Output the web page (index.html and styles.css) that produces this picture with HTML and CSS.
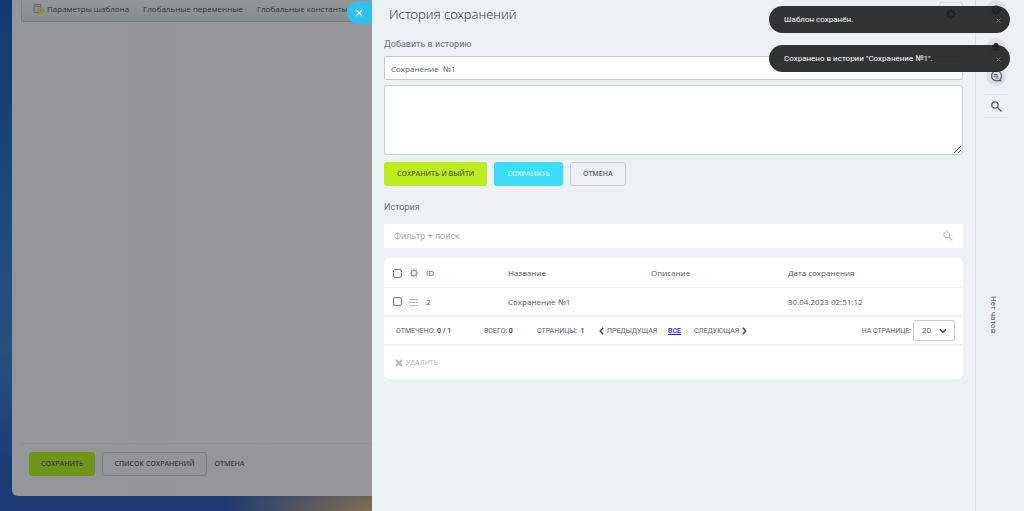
FILE: index.html
```html
<!DOCTYPE html>
<html lang="ru">
<head>
<meta charset="utf-8">
<title>История сохранений</title>
<link rel="stylesheet" href="styles.css">
</head>
<body>
<div class="app">
  <section class="backdrop">
    <div class="page">
      <nav class="toolbar">
        <a class="tool" href="#"><svg class="tool-icon" width="11" height="10" viewBox="0 0 11 10"><path d="M1 .5h7v8H1zM1 2.500h7" fill="none" stroke="#62668c"/><circle cx="7.500" cy="6.500" r="2.800" fill="#a39a4c" stroke="#7f783f"/><circle cx="7.500" cy="6.500" r="1" fill="#746d36"/></svg>Параметры шаблона</a>
        <a class="tool" href="#">Глобальные переменные</a>
        <a class="tool" href="#">Глобальные константы</a>
      </nav>
      <div class="page-actions">
        <button class="btn btn-dim-green">СОХРАНИТЬ</button>
        <button class="btn btn-dim-outline">СПИСОК СОХРАНЕНИЙ</button>
        <button class="btn btn-dim-link">ОТМЕНА</button>
      </div>
    </div>
  </section>
  <main class="panel">
    <button class="panel-close" aria-label="Закрыть"><svg width="8" height="8" viewBox="0 0 8 8"><path d="M1 1l6 6M7 1L1 7" stroke="#fff" stroke-width="1.300"/></svg></button>
    <header class="panel-head">
      <h1>История сохранений</h1>
      <button class="settings" aria-label="Настройки"><svg width="12" height="12" viewBox="-6 -6 12 12"><circle r="2.700" fill="none" stroke="#20242a" stroke-width="2"/><path d="M0-5V-3M0 5V3M-5 0H-3M5 0H3M-3.500-3.500L-2.300-2.300M3.500 3.500L2.300 2.300M-3.500 3.500L-2.300 2.300M3.500-3.500L2.300-2.300" stroke="#20242a" stroke-width="2"/></svg></button>
    </header>
    <form class="save-form">
      <label for="name">Добавить в историю</label>
      <input class="field" id="name" type="text" value="Сохранение  №1">
      <textarea class="field area" aria-label="Описание"></textarea>
      <div class="form-actions">
        <button type="button" class="btn btn-green">СОХРАНИТЬ И ВЫЙТИ</button>
        <button type="button" class="btn btn-blue">СОХРАНИТЬ</button>
        <button type="button" class="btn btn-outline">ОТМЕНА</button>
      </div>
    </form>
    <h2>История</h2>
    <div class="search">
      <input type="text" placeholder="Фильтр + поиск" aria-label="Фильтр + поиск">
      <svg width="10" height="10" viewBox="0 0 10 10"><circle cx="3.800" cy="3.800" r="3" fill="none" stroke="#b5babf"/><path d="M6 6l3.300 3.300" stroke="#b5babf" stroke-width="1.200"/></svg>
    </div>
    <div class="grid">
      <table>
        <colgroup><col class="c-check"><col class="c-menu"><col class="c-id"><col class="c-name"><col class="c-desc"><col></colgroup>
        <thead>
          <tr>
            <th><input type="checkbox" aria-label="Выбрать все"></th>
            <th><svg width="10" height="10" viewBox="-5 -5 10 10"><circle r="2.500" fill="none" stroke="#8f959b" stroke-width="1.100"/><path d="M0-4.200V-3M0 4.200V3M-4.200 0H-3M4.200 0H3M-3-3L-2.100-2.100M3 3L2.100 2.100M-3 3L-2.100 2.100M3-3L2.100-2.100" stroke="#8f959b" stroke-width="1.200"/></svg></th>
            <th>ID</th><th>Название</th><th>Описание</th><th>Дата сохранения</th>
          </tr>
        </thead>
        <tbody>
          <tr>
            <td><input type="checkbox" aria-label="Выбрать строку 2"></td>
            <td><svg width="10" height="7" viewBox="0 0 10 7"><path d="M0 .5h9M0 3.500h9M0 6.500h9" stroke="#b5b9be"/></svg></td>
            <td>2</td><td>Сохранение №1</td><td></td><td>30.04.2023 02:51:12</td>
          </tr>
        </tbody>
      </table>
      <div class="pager">
        <span class="p-marked">ОТМЕЧЕНО: <b>0 / 1</b></span>
        <span class="p-total">ВСЕГО: <b>0</b></span>
        <span class="p-pages">СТРАНИЦЫ: <b>&nbsp;1</b></span>
        <span class="p-prev"><svg width="5" height="8" viewBox="0 0 5 8"><path d="M4.200 .8L1.200 4l3 3.200" fill="none" stroke="#414953" stroke-width="1.500"/></svg> ПРЕДЫДУЩАЯ</span>
        <a class="p-all" href="#">ВСЕ</a>
        <span class="p-next">СЛЕДУЮЩАЯ <svg width="5" height="8" viewBox="0 0 5 8"><path d="M.8 .8l3 3.200-3 3.200" fill="none" stroke="#414953" stroke-width="1.500"/></svg></span>
        <label class="p-size" for="size">НА СТРАНИЦЕ:</label>
        <span class="select"><select id="size"><option>20</option></select><svg width="8" height="6" viewBox="0 0 8 6"><path d="M1 1.200l3 3 3-3" fill="none" stroke="#414953" stroke-width="1.500"/></svg></span>
      </div>
      <div class="bulk">
        <button class="delete" disabled><svg width="8" height="8" viewBox="0 0 8 8"><path d="M1 1l6 6M7 1L1 7" stroke="#b5b9be" stroke-width="2"/></svg>УДАЛИТЬ</button>
      </div>
    </div>
  </main>
  <aside class="rail">
    <button class="round" aria-label="Помощь"><svg width="10" height="10" viewBox="0 0 10 10"><circle cx="5" cy="5" r="4.500" fill="#20242a"/><path d="M3.500 4c0-2 3-2 3-.3C6.500 4.700 5 4.700 5 6M5 7v1" fill="none" stroke="#dfe3e8"/></svg></button>
    <button class="round" aria-label="Уведомления"><svg width="10" height="10" viewBox="0 0 10 10"><path d="M5 0c2.500 0 3 2 3 4 0 2 1 2.500 1.500 3.500h-9C1 6.500 2 6 2 4c0-2 .5-4 3-4zM3.500 8.500h3L5 10z" fill="#20242a"/></svg></button>
    <button class="round" aria-label="Чаты"><svg width="12" height="12" viewBox="0 0 12 12"><path d="M10 9.500a5 5 0 1 0-1.500 1L10.800 11z" fill="none" stroke="#525c69" stroke-width="1.200"/><path d="M3.500 4.500h4M3.500 6.300h5M5.500 8.100h3" stroke="#525c69"/></svg></button>
    <button class="rail-search" aria-label="Поиск"><svg width="11" height="11" viewBox="0 0 11 11"><circle cx="4" cy="4" r="3.200" fill="none" stroke="#525c69" stroke-width="1.200"/><path d="M6.300 6.300l4.200 4.200" stroke="#525c69" stroke-width="1.400"/></svg></button>
    <p class="no-chats">Нет чатов</p>
  </aside>
  <div class="toasts">
    <div class="toast">Шаблон сохранён.<button aria-label="Закрыть уведомление"><svg width="5" height="5" viewBox="0 0 5 5"><path d="M.5 .5l4 4M4.500 .5l-4 4" stroke="#77797c"/></svg></button></div>
    <div class="toast">Сохранено в истории "Сохранение №1".<button aria-label="Закрыть уведомление"><svg width="5" height="5" viewBox="0 0 5 5"><path d="M.5 .5l4 4M4.500 .5l-4 4" stroke="#77797c"/></svg></button></div>
  </div>
</div>
</body>
</html>
```
FILE: styles.css
```css
* { box-sizing: border-box; }
body {
  margin: 0;
  font: 8px/12px "Open Sans", "Noto Sans", sans-serif;
  color: #535c69;
}
button, input, textarea, select { font: inherit; color: inherit; margin: 0; }
button { border: 0; padding: 0; background: none; }
svg { display: block; flex: none; }
a { color: inherit; text-decoration: none; }

.app {
  position: relative;
  display: grid;
  grid-template-columns: 372px minmax(0, 1fr) 49px;
  min-height: 100vh;
  overflow: hidden;
}

/* dimmed page under the slider */
.backdrop {
  display: flex;
  padding: 0 0 15px 12px;
  background:
    radial-gradient(ellipse 150px 60px at 100% 100%, #856f52, rgba(133, 111, 82, 0) 100%),
    linear-gradient(180deg, #123a70, #1d4a7c 43%, #29507f 68%, #1d3d76 90%, #1c3a70);
}
.page {
  flex: 1;
  min-width: 0;
  display: flex;
  flex-direction: column;
  justify-content: space-between;
  padding: 0 0 20px 9px;
  border-bottom-left-radius: 6px;
  background: linear-gradient(90deg, #949699, #969599 60%, #98969a);
}
.toolbar {
  display: flex;
  align-items: center;
  gap: 14px;
  height: 22px;
  padding: 0 0 3px 11px;
  border: solid #747c80;
  border-width: 0 0 1px 1px;
  border-bottom-left-radius: 2px;
  background: linear-gradient(180deg, #929899, #868d90);
  color: #33373b;
  white-space: nowrap;
}
.tool { display: flex; align-items: center; gap: 3px; }
.page-actions {
  display: flex;
  align-items: center;
  gap: 7px;
  padding: 8px 0 0 8px;
  border-top: 1px dotted #888b8f;
}
.btn {
  height: 24px;
  padding: 0 12px;
  border: 1px solid transparent;
  border-radius: 3px;
  font-size: 7px;
  font-weight: 600;
  white-space: nowrap;
}
.page-actions .btn { padding: 0 11px; }
.btn-dim-green { background: #71941a; color: #33402b; }
.btn-dim-outline { border-color: #7b7f84; color: #383d45; }
.page-actions .btn-dim-link { padding: 0; color: #383d45; }

.panel {
  position: relative;
  padding: 0 12px;
  background: #ecf1f4;
}
.panel-close {
  position: absolute;
  left: -25px;
  top: 1px;
  display: flex;
  align-items: center;
  justify-content: center;
  width: 25px;
  height: 23px;
  padding-right: 2px;
  border-radius: 12px 0 0 12px;
  background: #2fc0ec;
}
.panel-head {
  display: flex;
  align-items: center;
  justify-content: space-between;
  height: 28px;
  padding-left: 5px;
}
h1 { margin: 0; font-family: "Noto Sans", sans-serif; font-size: 13px; font-weight: 300; color: #3c3f44; }
.settings {
  display: flex;
  align-items: center;
  justify-content: center;
  width: 24px;
  height: 24px;
  border: 1px solid #d3d8dd;
  border-radius: 2px;
}
.save-form { display: flex; flex-direction: column; padding-top: 10px; }
.save-form label, h2 {
  margin: 0;
  font-family: Roboto, "Open Sans", sans-serif;
  font-size: 9px;
  line-height: 13px;
  font-weight: 400;
  color: #6b7077;
}
.field {
  width: 100%;
  height: 24px;
  margin-top: 5px;
  padding: 0 6px;
  border: 1px solid #c6cdd3;
  border-radius: 2px;
  background: #fff;
  white-space: pre;
  outline: 0;
}
.area { height: 70px; resize: vertical; }
.form-actions { display: flex; gap: 7px; padding: 7px 0 15px; }
.btn-green { background: #bbed21; color: #535c39; }
.btn-blue { background: #3bdcfd; color: #fff; }
.btn-outline { border-color: #c6cdd3; color: #535c69; }

.search {
  display: flex;
  align-items: center;
  height: 24px;
  margin: 10px 0;
  padding: 0 10px;
  border-radius: 2px;
  background: #fff;
}
.search input {
  flex: 1;
  min-width: 0;
  padding: 0;
  border: 0;
  outline: 0;
  background: none;
  font-family: Roboto, "Open Sans", sans-serif;
  font-size: 9px;
}
.search input::placeholder { color: #a8adb4; opacity: 1; }

.grid { border-radius: 6px; background: #fff; }
table { width: 100%; border-collapse: collapse; table-layout: fixed; }
.c-check { width: 25px; }
.c-menu { width: 17px; }
.c-id { width: 82px; }
.c-name { width: 143px; }
.c-desc { width: 137px; }
th, td { height: 29px; padding: 2px 0 0; border-bottom: 2px solid #eef0f2; text-align: left; font-weight: 400; }
th { border-bottom-width: 1px; }
th:first-child, td:first-child { padding-left: 9px; }
td:first-child { padding-top: 0; }
input[type="checkbox"] {
  display: block;
  width: 9px;
  height: 9px;
  border: 1px solid #767676;
  border-radius: 2px;
  appearance: none;
  background: #fff;
}
.pager {
  display: flex;
  align-items: center;
  height: 29px;
  padding: 0 8px 0 12px;
  border-bottom: 2px solid #eef0f2;
  font-family: Roboto, "Open Sans", sans-serif;
  font-size: 7px;
  white-space: nowrap;
}
.pager b { font-weight: 500; color: #333a45; }
.p-marked { width: 88px; }
.p-total { width: 53px; }
.p-pages { width: 62px; }
.p-prev, .p-next { display: flex; align-items: center; gap: 3px; }
.p-prev { width: 69px; }
.p-all { width: 26px; color: #2a2aa5; font-weight: 500; text-decoration: underline; }
.p-size { margin-left: auto; }
.select {
  display: flex;
  align-items: center;
  width: 42px;
  height: 21px;
  margin-left: 2px;
  padding: 0 7px 0 8px;
  border: 1px solid #c6cdd3;
  border-radius: 2px;
}
.select select { flex: 1; min-width: 0; border: 0; outline: 0; padding: 0; background: none; appearance: none; font-size: 8px; }
.bulk { display: flex; align-items: center; height: 33px; padding-left: 11px; }
.delete {
  display: flex;
  align-items: center;
  gap: 3px;
  font-size: 7px;
  color: #b0b4b9;
}

.rail {
  display: flex;
  flex-direction: column;
  align-items: center;
  padding-right: 8px;
  border-left: 1px solid #d9e1e5;
  background: #ecf1f4;
}
.round {
  display: flex;
  align-items: center;
  justify-content: center;
  width: 20px;
  height: 20px;
  margin-bottom: 18px;
  border-radius: 10px;
  background: #dce0e6;
}
.round + .round { margin-bottom: 8px; }
.rail-search {
  display: flex;
  align-items: center;
  justify-content: center;
  width: 26px;
  height: 24px;
  border: solid #e2e7ea;
  border-width: 1px 0;
}
.no-chats {
  margin: auto 0;
  padding-right: 6px;
  font-family: Roboto, "Open Sans", sans-serif;
  writing-mode: vertical-rl;
}

.toasts {
  position: absolute;
  top: 6px;
  right: 14px;
  display: grid;
  gap: 12px;
  width: 241px;
}
.toast {
  display: flex;
  align-items: center;
  justify-content: space-between;
  height: 27px;
  padding: 1px 9px 0 15px;
  border-radius: 14px;
  background: rgba(34, 35, 37, .93);
  color: #fff;
  font-family: Roboto, "Open Sans", sans-serif;
}
```
